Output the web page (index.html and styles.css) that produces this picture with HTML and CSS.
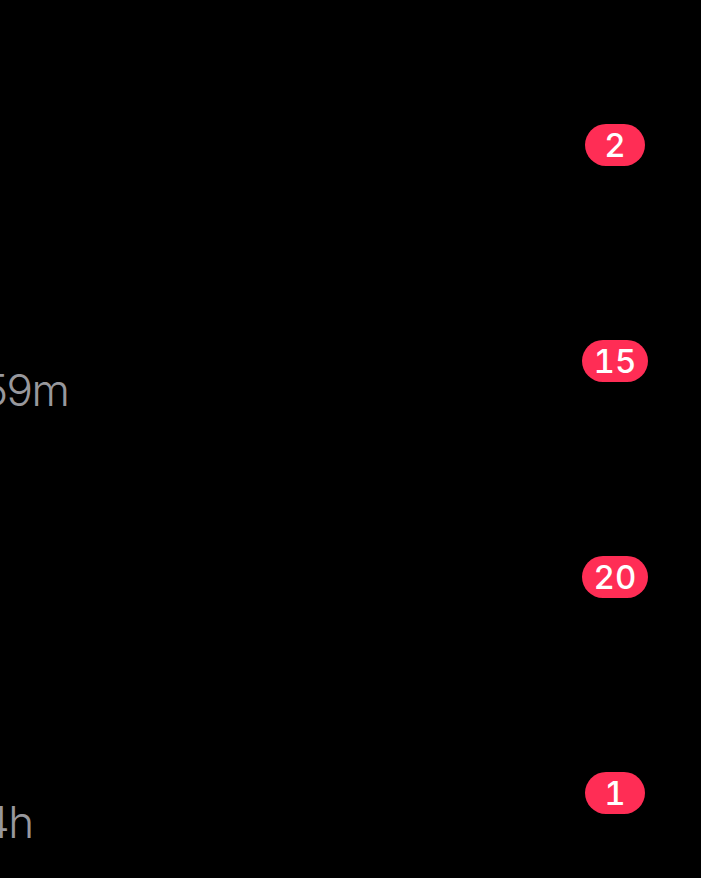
FILE: index.html
```html
<!DOCTYPE html>
<html lang="en">
<head>
    <meta charset="UTF-8">
    <meta name="viewport" content="width=device-width, initial-scale=1.0">
    <title>Notificaciones</title>
    <link rel="stylesheet" href="styles.css">
</head>
<body>

<main class="list">
    <div class="row">
        <div class="info"></div>
        <div class="count"><span class="badge">2</span></div>
    </div>
    <div class="row">
        <div class="info"><p class="sub">59m</p></div>
        <div class="count"><span class="badge">15</span></div>
    </div>
    <div class="row">
        <div class="info"></div>
        <div class="count"><span class="badge">20</span></div>
    </div>
    <div class="row">
        <div class="info"><p class="sub">4h</p></div>
        <div class="count"><span class="badge">1</span></div>
    </div>
</main>

</body>
</html>
```

FILE: styles.css
```css
html, body {
    margin: 0;
    background-color: #000;
    height: 100%;
    overflow: hidden;
}

body {
    font-family: Inter, "Noto Sans", sans-serif;
}

.list {
    padding-top: 37px;
}

.row {
    height: 216px;
    display: flex;
    justify-content: space-between;
    align-items: center;
    padding-right: 46px;
}

.info {
    align-self: stretch;
    padding-top: 111px;
    margin-left: -18px;
}

.sub {
    margin: 0;
    font-size: 44px;
    font-weight: 300;
    letter-spacing: -1.5px;
    line-height: 53px;
    color: #98989d;
}

.count {
    width: 80px;
    display: flex;
    justify-content: center;
}

.badge {
    min-width: 60px;
    height: 42px;
    padding: 0 12px;
    box-sizing: border-box;
    border-radius: 21px;
    background-color: #ff2d55; /* rosa iOS */
    color: #fff;
    font-size: 33px;
    font-weight: 500;
    font-variant-numeric: tabular-nums;
    line-height: 42px;
    text-align: center;
}
```
